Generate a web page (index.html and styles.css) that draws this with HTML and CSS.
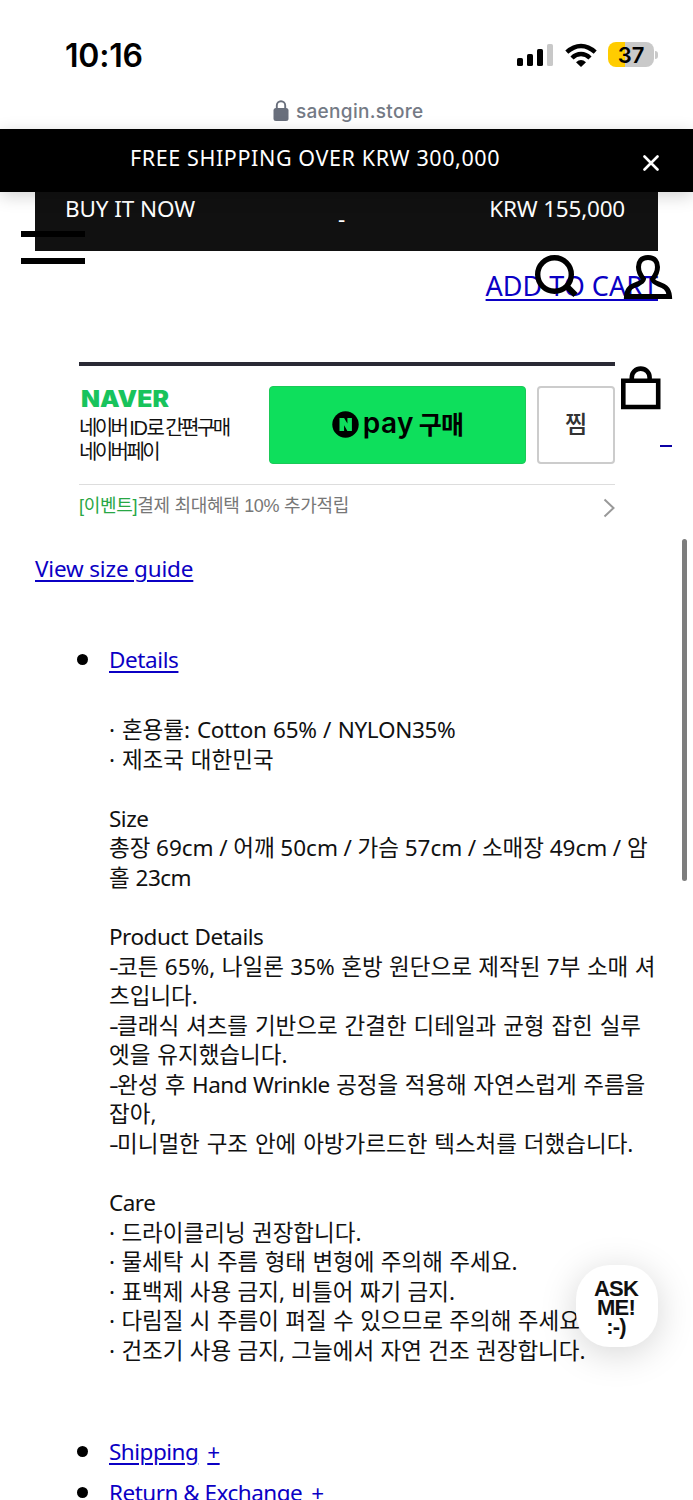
FILE: index.html
```html
<!DOCTYPE html>
<html lang="ko">
<head>
<meta charset="utf-8">
<title>saengin.store</title>
<link rel="stylesheet" href="styles.css">
</head>
<body>
<div class="screen">
  <header class="status">
    <span class="clock">10:16</span>
    <div class="indicators">
      <svg class="signal" width="36" height="24" viewBox="0 0 36 24"><rect x="0" y="15" width="6" height="8" rx="1.6"/><rect x="10" y="11" width="6" height="12" rx="1.6"/><rect x="20" y="6" width="6" height="17" rx="1.6"/><rect x="30" y="1" width="6" height="22" rx="1.6" fill="#c8c8c8"/></svg>
      <svg class="wifi" width="32" height="24" viewBox="0 0 32 24"><g fill="none" stroke="#000" stroke-width="4.400"><path d="M1.800 9.200Q8.500 3 16 3T30.200 9.200"/><path d="M7 15Q11 11 16 11T25 15"/></g><path d="M11 19.200Q16 14.700 21 19.200L16 24Z"/></svg>
      <div class="battery"><span>37</span></div>
      <i class="battery-tip"></i>
    </div>
  </header>
  <div class="address">
    <svg width="16" height="22" viewBox="0 0 16 22"><rect x="0.500" y="8" width="15" height="13" rx="2.500" fill="#696f7c"/><path d="M3.800 9V5.500a4.200 4.200 0 0 1 8.400 0V9" fill="none" stroke="#696f7c" stroke-width="1.900"/></svg>
    <span>saengin.store</span>
  </div>
  <div class="banner">
    <span class="banner-text">FREE SHIPPING OVER KRW 300,000</span>
    <svg class="close" width="16" height="16" viewBox="0 0 16 16"><path d="M1.500 1.500l13 13M14.500 1.500l-13 13" stroke="#fff" stroke-width="2.600" stroke-linecap="round"/></svg>
  </div>
  <main>
    <div class="buy"><span class="buy-label">BUY IT NOW</span><span class="dash">-</span><span class="price">KRW 155,000</span></div>
    <div class="cart"><a href="#">ADD TO CART</a></div>
    <section class="naver">
      <div class="pay-row">
        <div class="pay-copy"><b>NAVER</b><span class="copy-id">네이버 <span class="id">ID</span>로 간편구매</span><span class="copy-pay">네이버페이</span></div>
        <div class="pay-button">
          <svg width="27" height="27" viewBox="0 0 27 27"><circle cx="13.500" cy="13.500" r="13.200"/><path d="M7.500 20V7h4.600l3.300 5.500V7h4.500v13h-4.500l-3.300-5.700V20z" fill="#0edf5c"/></svg>
          <span class="pay-word">pay</span><span class="pay-buy">구매</span>
        </div>
        <div class="wish">찜</div>
      </div>
      <div class="event"><span class="event-text"><em>[이벤트]</em>결제 최대혜택 10% 추가적립</span><svg width="12" height="20" viewBox="0 0 12 20"><path d="M1.500 1.500l9 8.500-9 8.500" fill="none" stroke="#999" stroke-width="2"/></svg></div>
    </section>
    <a class="guide" href="#">View size guide</a>
    <ul class="tabs">
      <li><a class="details" href="#">Details</a>
        <div class="copy">
          <p>· 혼용률: <span class="fabric">Cotton 65% / NYLON35%</span></p>
          <p>· 제조국 대한민국</p>
          <p></p>
          <p class="latin">Size</p>
          <p class="sizes">총장 69cm / 어깨 50cm / 가슴 57cm / 소매장 49cm / 암</p>
          <p class="latin">홀 23cm</p>
          <p></p>
          <p class="latin">Product Details</p>
          <p class="blend"><span class="hyphen">-</span>코튼 65%, 나일론 35% 혼방 원단으로 제작된 7부 소매 셔</p>
          <p>츠입니다.</p>
          <p><span class="hyphen">-</span>클래식 셔츠를 기반으로 간결한 디테일과 균형 잡힌 실루</p>
          <p>엣을 유지했습니다.</p>
          <p class="finish"><span class="hyphen">-</span>완성 후 <span class="latin">Hand Wrinkle</span> 공정을 적용해 자연스럽게 주름을</p>
          <p>잡아,</p>
          <p><span class="hyphen">-</span>미니멀한 구조 안에 아방가르드한 텍스처를 더했습니다.</p>
          <p></p>
          <p class="latin">Care</p>
          <p class="care">· 드라이클리닝 권장합니다.</p>
          <p class="care">· 물세탁 시 주름 형태 변형에 주의해 주세요.</p>
          <p class="care">· 표백제 사용 금지, 비틀어 짜기 금지.</p>
          <p class="care">· 다림질 시 주름이 펴질 수 있으므로 주의해 주세요.</p>
          <p class="care">· 건조기 사용 금지, 그늘에서 자연 건조 권장합니다.</p>
        </div>
      </li>
      <li class="closed"><a href="#">Shipping</a><a href="#">+</a></li>
      <li class="closed"><a href="#">Return &amp; Exchange</a><a href="#">+</a></li>
    </ul>
  </main>
  <div class="menu"></div>
  <svg class="search" width="46" height="46" viewBox="0 0 46 46" fill="none" stroke="#000"><circle cx="21.500" cy="19.500" r="16.800" stroke-width="5.400"/><path d="M32.500 30l10 10" stroke-width="6"/></svg>
  <svg class="user" width="50" height="46" viewBox="0 0 50 46"><path d="M25 3.500C18 3.500 15.500 8 15.500 13c0 5 2.500 9 5 12-1 7-16 3-17 17.500h43C45.500 28 30.500 32 29.500 25c2.500-3 5-7 5-12 0-5-2.500-9.500-9.500-9.500z" fill="none" stroke="#000" stroke-width="5"/></svg>
  <svg class="bag" width="40" height="44" viewBox="0 0 40 44" fill="none" stroke="#000" stroke-width="4.600"><path d="M2.300 14.800H37.200V41H2.300z"/><path d="M10.800 14V11.500a8.900 8.900 0 0 1 17.800 0V14"/></svg>
  <i class="bag-line"></i>
  <i class="scrollbar"></i>
  <div class="ask"><span>ASK</span><span>ME!</span><span>:-)</span></div>
</div>
</body>
</html>
```
FILE: styles.css
```css
* { box-sizing: border-box; }
body { margin: 0; background: #fff; }
.screen { position: relative; width: 693px; height: 1500px; overflow: hidden; background: #fff; color: #111; font: 22.5px/29.57px "Noto Sans", "Noto Sans CJK KR", sans-serif; white-space: nowrap; }
a { color: #0b00c4; text-decoration-thickness: 2px; text-underline-offset: 3px; }
.status { height: 94px; padding: 35px 35px 0 65px; display: flex; justify-content: space-between; align-items: flex-start; }
.clock { font: 600 32px/41px Inter, sans-serif; color: #000; letter-spacing: -0.2px; }
.indicators { display: flex; align-items: center; padding-top: 7px; }
.wifi { margin: 0 11px 0 12px; }
.battery { width: 46px; height: 25px; border-radius: 8px; background: linear-gradient(90deg, #fc0 17px, #c9c9c9 17px); font: 600 22px/26px Inter, sans-serif; color: #000; text-align: center; }
.battery-tip { width: 3px; height: 8px; margin-left: 1px; border-radius: 0 4px 4px 0; background: #c9c9c9; }
.address { height: 35px; padding: 6px 0 0 273px; display: flex; gap: 7px; color: #747a85; font: 500 19px/23px Inter, sans-serif; letter-spacing: 0.3px; }
.banner { position: relative; z-index: 1; height: 63px; padding: 14px 34px 0 130px; display: flex; justify-content: space-between; background: #000; color: #fff; box-shadow: 0 4px 16px rgba(0,0,0,.18); }
.banner-text { font-size: 21.5px; letter-spacing: 0.6px; }
.close { margin-top: 12px; }
.buy { height: 59px; margin: 0 35px; padding: 2px 33px 0 30px; display: grid; grid-template-columns: 273px 1fr auto; background: #111; color: #fff; letter-spacing: -0.1px; }
.dash { padding-top: 10px; }
.price { letter-spacing: -0.2px; }
.cart { height: 111px; padding: 18px 35px 0 0; display: flex; justify-content: flex-end; align-items: flex-start; font-size: 27px; line-height: 34px; }
.naver { width: 536px; height: 177px; margin-left: 79px; border-top: 4px solid #2a2a35; }
.pay-row { height: 119px; padding-top: 20px; display: grid; grid-template-columns: 190px 257px 89px; border-bottom: 1px solid #ddd; }
.pay-copy { display: flex; flex-direction: column; align-items: flex-start; font: 20px/24px "Liberation Sans", "Noto Sans CJK KR", sans-serif; color: #111; letter-spacing: -2.6px; }
.id { letter-spacing: -1.4px; }
.pay-copy b { margin: 0 0 5px 2px; color: #18c35c; font: 900 22.5px/25px Inter, sans-serif; letter-spacing: 0; transform: scaleX(1.1); transform-origin: left; }
.pay-button { height: 78px; border: 1px solid #1bc958; border-radius: 4px; background: #0edf5c; display: flex; align-items: center; justify-content: center; color: #000; }
.pay-button svg { margin-top: -1px; }
.pay-word { margin: -5px 5px 0 4px; font: 600 28px/30px Inter, sans-serif; letter-spacing: 0.4px; }
.pay-buy { margin-top: -5px; font: 700 25px/30px "Noto Sans CJK KR", sans-serif; letter-spacing: -0.8px; }
.wish { width: 78px; height: 78px; margin-left: 11px; border: 2px solid #ccc; border-radius: 4px; text-align: center; font: 500 24px/70px "Noto Sans CJK KR", sans-serif; color: #333; }
.event { display: flex; justify-content: space-between; align-items: flex-start; padding-top: 6px; font: 18px/30px "Liberation Sans", "Noto Sans CJK KR", sans-serif; letter-spacing: -0.3px; color: #777; }
.event em { font-style: normal; color: #28a745; }
.event svg { margin-top: 7px; }
.guide { display: block; width: max-content; margin: 15px 0 0 35px; letter-spacing: -0.17px; }
.tabs { margin: 61px 0 0; padding: 0 0 0 109px; list-style: none; }
.tabs li { position: relative; height: 41px; }
.tabs li:first-child { height: 792px; }
.tabs li::before { content: ""; position: absolute; left: -32px; top: 9px; width: 11px; height: 11px; border-radius: 50%; background: #000; }
.details { letter-spacing: -0.4px; }
.closed { display: flex; gap: 9px; letter-spacing: -0.5px; }
.copy { margin-top: 41px; word-spacing: 1px; }
.copy p { margin: 0; height: 29.57px; }
.latin { letter-spacing: -0.5px; }
.fabric { letter-spacing: -0.32px; }
.hyphen { display: inline-block; width: 8px; transform: scaleX(1.35); transform-origin: left; }
.sizes { word-spacing: -0.2px; }
.copy .blend { word-spacing: 0.6px; }
.finish { word-spacing: 0.6px; }
.care { word-spacing: 0.5px; }
.menu { position: absolute; left: 21px; top: 231px; width: 64px; height: 33px; border-top: 6px solid #000; border-bottom: 6px solid #000; }
.search { position: absolute; left: 533px; top: 255px; }
.user { position: absolute; left: 623px; top: 254px; }
.bag { position: absolute; left: 621px; top: 366px; }
.bag-line { position: absolute; left: 660px; top: 445px; width: 12px; height: 2px; background: #0b00a4; }
.scrollbar { position: absolute; left: 682px; top: 539px; width: 5px; height: 342px; border-radius: 3px; background: #7d7d7d; }
.ask { position: absolute; left: 576px; top: 1265px; width: 82px; height: 82px; padding: 14px 2px 0 0; border-radius: 34px; background: #fff; box-shadow: 0 6px 36px rgba(0,0,0,.17); display: flex; flex-direction: column; align-items: center; font: 700 22px/19px "Liberation Sans", sans-serif; letter-spacing: -0.8px; }
```
